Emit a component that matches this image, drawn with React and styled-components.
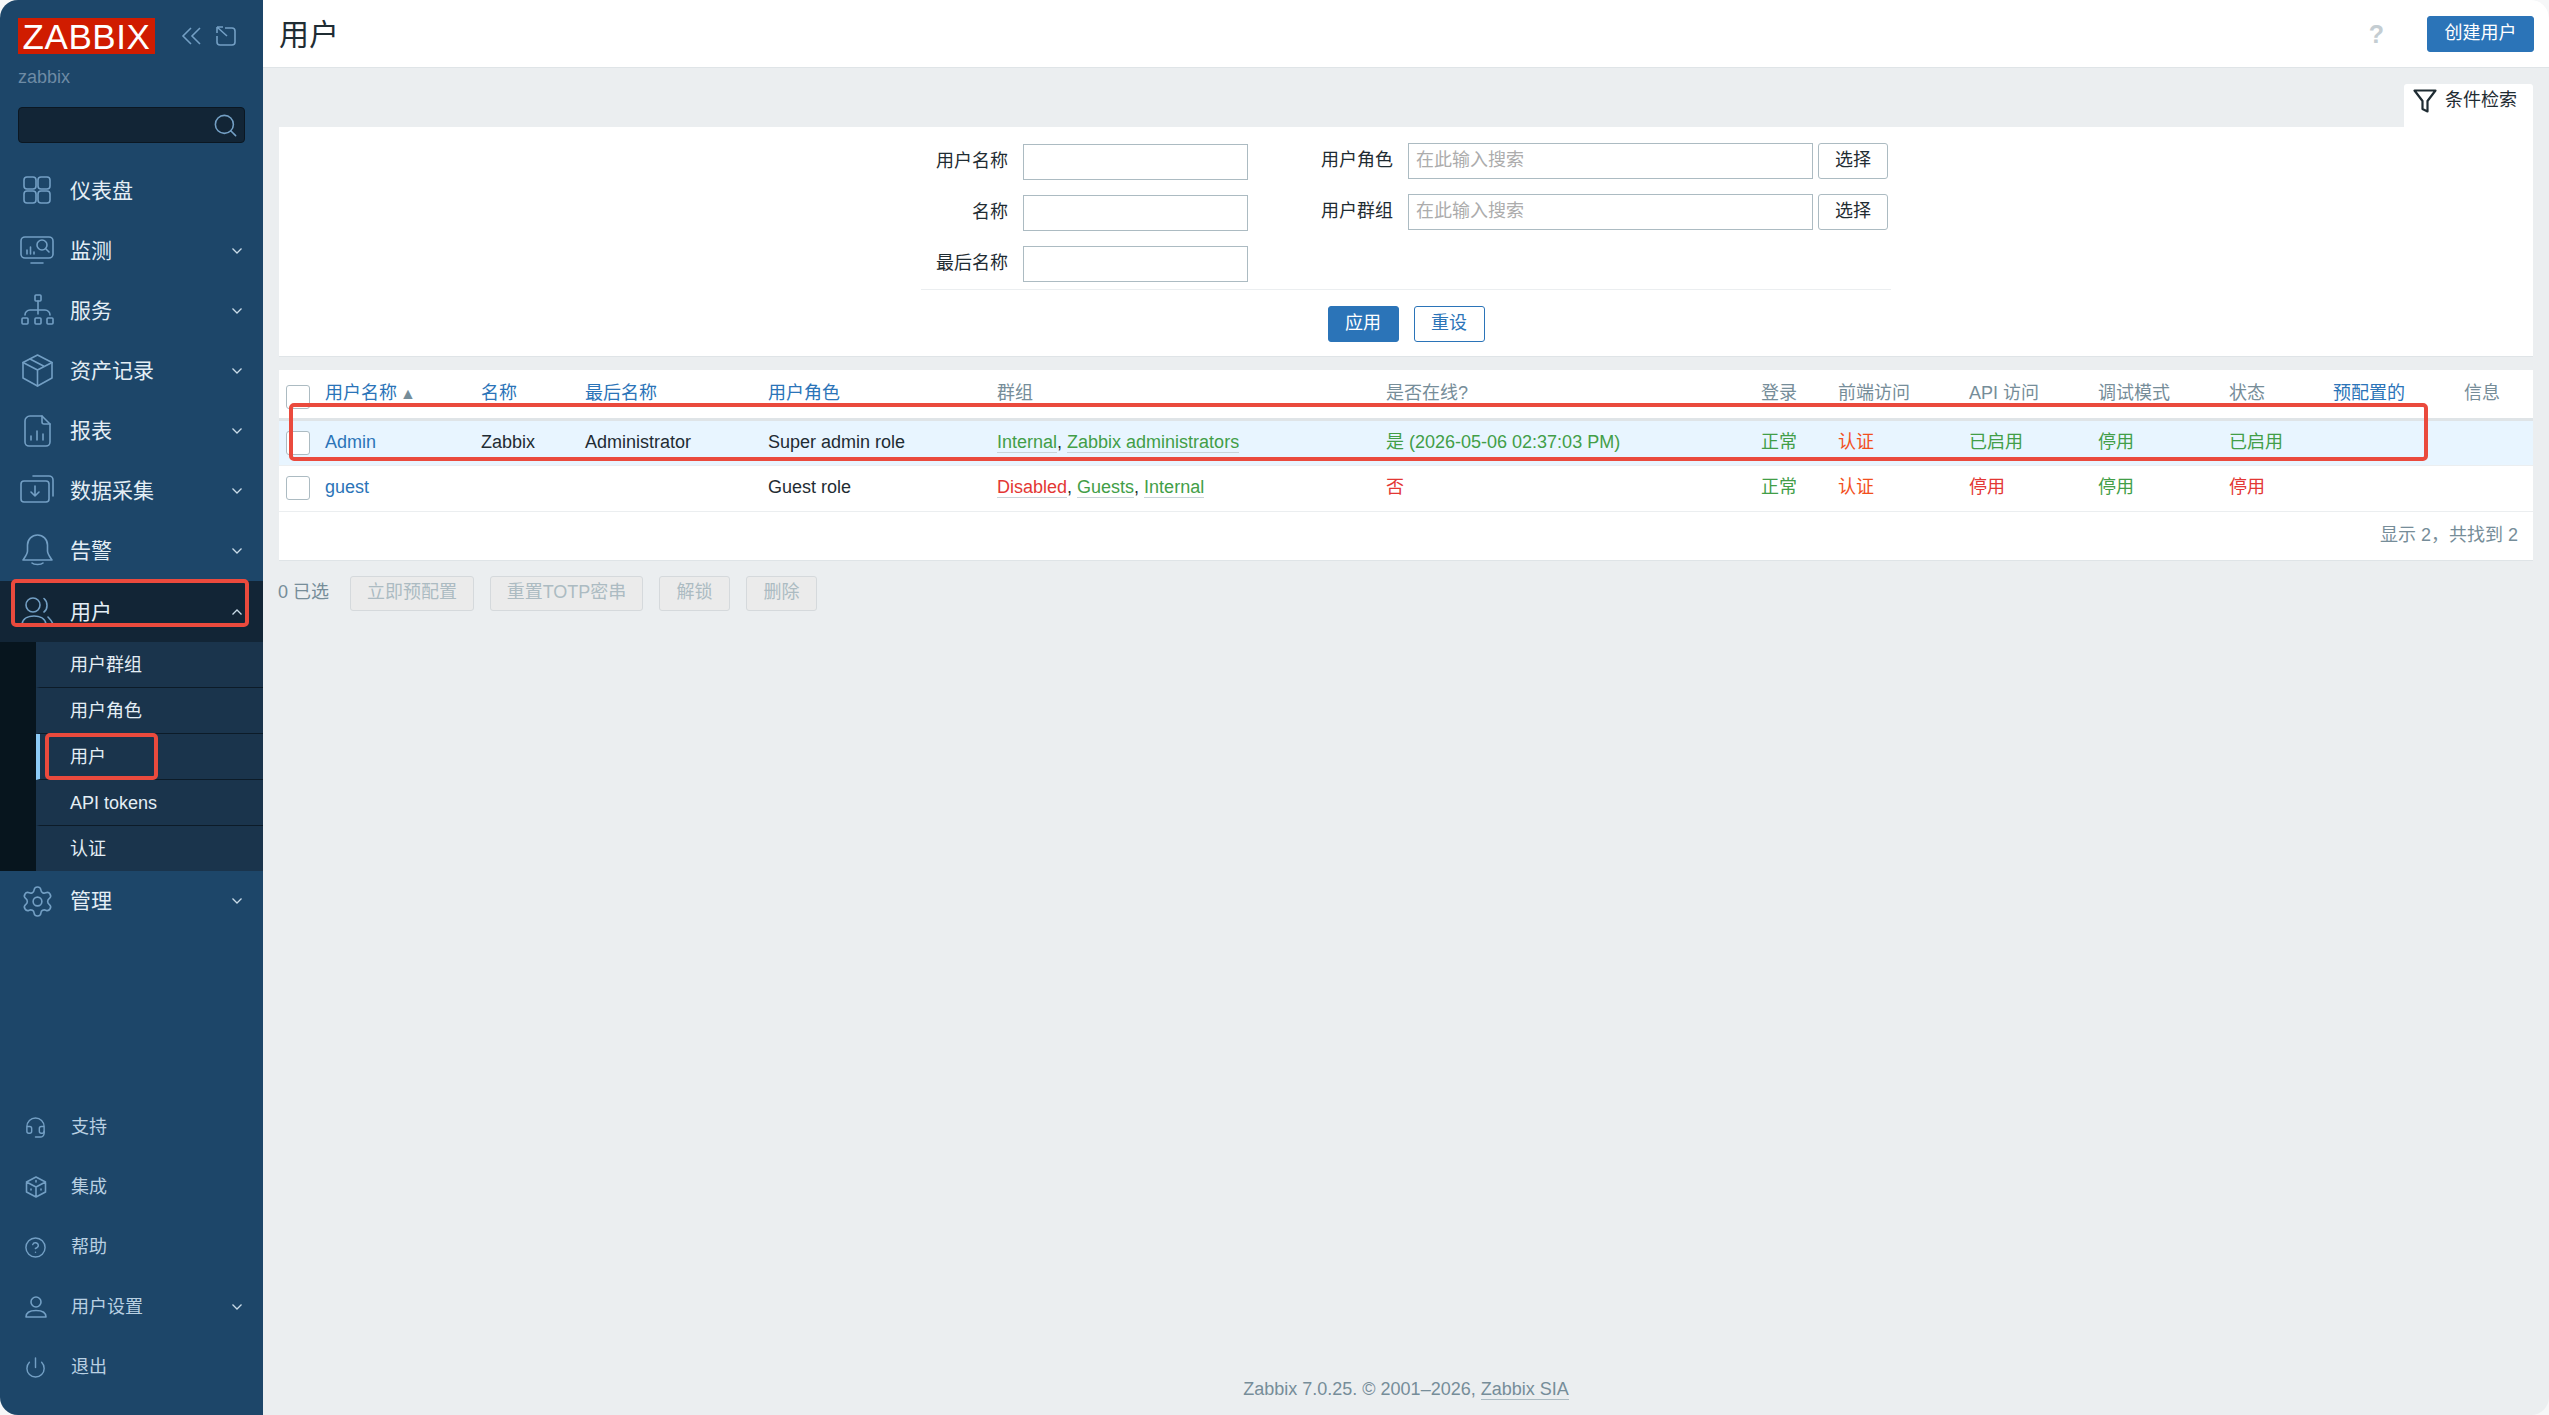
import React from 'react'
import styled, { createGlobalStyle } from 'styled-components'
import { Settings, Headset, CircleHelp, Power, Search } from 'lucide-react'

const ICON = '#739fc4'

const GlobalStyle = createGlobalStyle`
  html, body {
    margin: 0;
    background: #f6f7f8;
    overflow: hidden;
  }
  * {
    box-sizing: border-box;
  }
  body {
    font-family: "Liberation Sans", "Noto Sans CJK SC", sans-serif;
    font-size: 18px;
    line-height: 22px;
    color: #1f2c33;
  }
`

const Shell = styled.div`
  background: #ebeef0;
  border-radius: 18px;
  display: flex;
  height: 100vh;
  overflow: hidden;
  position: relative;
  width: 100%;
`

const Sidebar = styled.aside`
  background: #1d4669;
  display: flex;
  flex: 0 0 263px;
  flex-direction: column;
  padding-top: 18px;
`

const BrandRow = styled.div`
  align-items: center;
  display: flex;
  height: 36px;
  padding-left: 18px;
`

const Logo = styled.div`
  background: #d01c00;
  color: #ffffff;
  font-size: 35px;
  height: 36px;
  letter-spacing: 0.6px;
  line-height: 37px;
  text-align: center;
  width: 137px;
`

const BrandControl = styled.svg`
  fill: none;
  margin-left: ${({ $gap }) => $gap}px;
  stroke: ${ICON};
  stroke-width: 1.6;
`

const Instance = styled.div`
  color: #6e8ba5;
  font-size: 18px;
  line-height: 22px;
  margin-top: 12px;
  padding-left: 18px;
`

const SearchBox = styled.div`
  align-items: center;
  background: #122536;
  border: 1px solid #0b1722;
  border-radius: 4px;
  color: ${ICON};
  display: flex;
  height: 36px;
  justify-content: flex-end;
  margin: 19px 18px 18px 18px;
  padding-right: 5px;
`

const NavRow = styled.div`
  align-items: center;
  background: ${({ $active }) => ($active ? '#122536' : 'transparent')};
  color: #e4eef5;
  display: flex;
  font-size: 21px;
  height: ${({ $active }) => ($active ? 61 : 60)}px;
  line-height: 26px;
  padding-right: 21px;
`

const IconSlot = styled.span`
  align-items: center;
  color: ${ICON};
  display: flex;
  flex: 0 0 70px;
  justify-content: center;
  padding-left: 4px;
`

const NavIcon = styled.svg`
  fill: none;
  stroke: ${ICON};
  stroke-linecap: round;
  stroke-linejoin: round;
  stroke-width: 1.6;
`

const Chevron = styled.svg`
  fill: none;
  margin-left: auto;
  stroke: #c9dbe8;
  stroke-width: 1.3;
`

const SubMenu = styled.div`
  background: #07151e;
  padding-left: 36px;
`

const SubItem = styled.div`
  align-items: center;
  background: #1a344c;
  border-bottom: 1px solid #0c1b28;
  border-left: 4px solid ${({ $active }) => ($active ? '#8ccbf7' : 'transparent')};
  color: #e4eef5;
  display: flex;
  font-size: 18px;
  height: ${({ $last }) => ($last ? 45 : 46)}px;
  padding-left: 30px;

  &:last-child {
    border-bottom: none;
  }
`

const BottomNav = styled.div`
  margin-top: auto;
  padding-bottom: 18px;
`

const BottomRow = styled.div`
  align-items: center;
  color: #b9d0e2;
  display: flex;
  font-size: 18px;
  height: 60px;
  padding-right: 21px;
`

const BottomIcon = styled.span`
  align-items: center;
  color: ${ICON};
  display: flex;
  flex: 0 0 71px;
  justify-content: center;
`

const Main = styled.main`
  display: flex;
  flex: 1;
  flex-direction: column;
  min-width: 0;
`

const Header = styled.header`
  align-items: center;
  background: #ffffff;
  border-bottom: 1px solid #dfe4e7;
  display: flex;
  flex: 0 0 68px;
  padding: 0 15px 0 16px;
`

const Title = styled.h1`
  font-size: 30px;
  font-weight: 400;
  line-height: 36px;
  margin: 2px 0 0;
`

const HelpMark = styled.span`
  color: #c4cdd2;
  font-size: 25px;
  font-weight: 700;
  margin-left: auto;
  margin-right: 43px;
`

const PrimaryButton = styled.button`
  background: #2b74b8;
  border: 1px solid #2b74b8;
  border-radius: 3px;
  color: #ffffff;
  font-family: inherit;
  font-size: 18px;
  height: 36px;
  line-height: 20px;
  padding: 0 0 2px;
  width: ${({ $width }) => $width}px;
`

const OutlineButton = styled(PrimaryButton)`
  background: #ffffff;
  color: #2b74b8;
`

const Content = styled.div`
  padding: 16px 16px 0 16px;
`

const TabRow = styled.div`
  display: flex;
  justify-content: flex-end;
`

const FilterTab = styled.div`
  align-items: flex-start;
  background: #ffffff;
  border-radius: 3px 3px 0 0;
  display: flex;
  font-size: 18px;
  gap: 8px;
  height: 43px;
  padding: 5px 0 0 9px;
  width: 129px;
`

const FilterPanel = styled.section`
  background: #ffffff;
  border-bottom: 1px solid #dfe4e7;
  height: 230px;
  padding-top: 16px;
`

const FilterForm = styled.div`
  margin: 0 auto;
  width: 970px;
`

const FilterColumns = styled.div`
  border-bottom: 1px solid #ebeef0;
  display: flex;
  height: 147px;
`

const LeftColumn = styled.div`
  align-content: start;
  display: grid;
  grid-template-columns: 87px 225px;
  column-gap: 15px;
  row-gap: 15px;
  padding-top: 1px;
`

const RightColumn = styled.div`
  align-content: start;
  display: grid;
  grid-template-columns: 87px 405px 70px;
  column-gap: 15px;
  row-gap: 15px;
  margin-left: 58px;
`

const FieldLabel = styled.label`
  align-self: center;
  padding-bottom: 2px;
  text-align: right;
  white-space: nowrap;
`

const TextField = styled.input`
  background: #ffffff;
  border: 1.5px solid #acbbc2;
  font-family: inherit;
  font-size: 18px;
  height: 36px;
  padding: 0 7px 2px;
  width: 100%;

  &::placeholder {
    color: #acacac;
  }
`

const SelectButton = styled.button`
  background: #ffffff;
  border: 1.5px solid #acbbc2;
  border-radius: 3px;
  color: #1f2c33;
  font-family: inherit;
  font-size: 18px;
  height: 36px;
  line-height: 20px;
  margin-left: -10px;
  padding: 0 0 2px;
  width: 70px;
`

const FilterActions = styled.div`
  display: flex;
  gap: 15px;
  justify-content: center;
  margin-top: 16px;
`

const TableCard = styled.section`
  background: #ffffff;
  border-bottom: 1px solid #dfe4e7;
  margin-top: 13px;
`

const Table = styled.table`
  border-collapse: collapse;
  table-layout: fixed;
  width: 100%;
`

const Th = styled.th`
  border-bottom: 3px solid #dfe4e7;
  color: ${({ $link }) => ($link ? '#2b74b8' : '#768d99')};
  font-size: 18px;
  font-weight: 400;
  height: 49px;
  padding: 0 0 1px;
  text-align: left;
  white-space: nowrap;
`

const HeaderBox = styled.span`
  background: #ffffff;
  border: 1.5px solid #acbbc2;
  border-radius: 3px;
  display: block;
  height: 24px;
  margin: 7px 0 0 7px;
  width: 24px;
`

const SortMark = styled.span`
  color: #768d99;
  font-size: 16px;
  margin-left: 3px;
`

const Row = styled.tr`
  background: ${({ $hot }) => ($hot ? '#e8f5ff' : '#ffffff')};
  border-bottom: 1px solid #ebeef0;
`

const Td = styled.td`
  color: ${({ $tone }) => $tone || '#1f2c33'};
  font-size: 18px;
  height: 46px;
  line-height: 22px;
  padding: 0 0 2px;
  white-space: nowrap;
`

const CheckBox = styled(HeaderBox)`
  margin: 2px 0 0 7px;
`

const NameLink = styled.a`
  color: #2b74b8;
`

const GroupLink = styled.a`
  border-bottom: 1px solid #c9d3d8;
  color: ${({ $tone }) => $tone};
`

const TableFooter = styled.div`
  color: #768d99;
  height: 48px;
  line-height: 46px;
  padding-right: 15px;
  text-align: right;
`

const BulkBar = styled.div`
  align-items: center;
  display: flex;
  gap: 16px;
  margin-top: 15px;
`

const SelectedCount = styled.span`
  color: #768d99;
  margin-left: -1px;
  padding-bottom: 2px;
  width: 56px;
`

const BulkButton = styled.button`
  background: #ebebeb;
  border: 1.5px solid #d5d9dc;
  border-radius: 3px;
  color: #acbbc2;
  font-family: inherit;
  font-size: 18px;
  height: 35px;
  line-height: 20px;
  padding: 0 0 2px;
  width: ${({ $width }) => $width}px;
`

const Footer = styled.footer`
  color: #768d99;
  line-height: 20px;
  margin-top: auto;
  padding-bottom: 16px;
  text-align: center;
`

const FooterLink = styled.a`
  border-bottom: 1px solid #acbbc2;
`

const Mark = styled.div`
  border: 4px solid #ea4a3d;
  border-radius: 5px;
  pointer-events: none;
  position: absolute;
`

const UserMenuMark = styled(Mark)`
  height: 48px;
  left: 11px;
  top: 579px;
  width: 238px;
`

const UserItemMark = styled(Mark)`
  height: 47px;
  left: 45px;
  top: 733px;
  width: 113px;
`

const RowMark = styled(Mark)`
  height: 58px;
  left: 289px;
  top: 403px;
  width: 2139px;
`

const Down = () => (
  <Chevron width="10" height="6" viewBox="0 0 10 6">
    <path d="M0.5 0.5 L5 5 L9.5 0.5" />
  </Chevron>
)

const Up = () => (
  <Chevron width="10" height="6" viewBox="0 0 10 6">
    <path d="M0.5 5.5 L5 1 L9.5 5.5" />
  </Chevron>
)

const Glyph = ({ children }) => (
  <NavIcon width="34" height="34" viewBox="0 0 34 34">{children}</NavIcon>
)

const DashboardIcon = () => (
  <Glyph>
    <rect x="4" y="3" width="12" height="12" rx="3" />
    <rect x="18" y="3" width="12" height="12" rx="3" />
    <rect x="4" y="17" width="12" height="12" rx="3" />
    <rect x="18" y="17" width="12" height="12" rx="3" />
  </Glyph>
)

const MonitorIcon = () => (
  <Glyph>
    <path d="M15 3 H5 a4 4 0 0 0 -4 4 V20 a4 4 0 0 0 4 4 H29 a4 4 0 0 0 4 -4 V7 a4 4 0 0 0 -4 -4 H15" />
    <path d="M11 29 H23 M7 16 V20 M10.5 13 V20 M14 18 V20" />
    <circle cx="22" cy="11" r="5" />
    <path d="M26 15 L29 18" />
  </Glyph>
)

const ServiceIcon = () => (
  <Glyph>
    <rect x="15" y="1" width="6" height="6" rx="1" />
    <rect x="2" y="24" width="6" height="6" rx="1" />
    <rect x="15" y="24" width="6" height="6" rx="1" />
    <rect x="27" y="24" width="6" height="6" rx="1" />
    <path d="M18 7 V20 M5 21 a5 5 0 0 1 5 -5 H25 a5 5 0 0 1 5 5" />
  </Glyph>
)

const InventoryIcon = () => (
  <Glyph>
    <path d="M17.5 1 L32 8.5 V24 L17.5 32 L3 24 V8.5 Z" />
    <path d="M3 8.5 L17.5 16 L32 8.5 M17.5 16 V32 M10 5 L24.5 12.5" />
  </Glyph>
)

const ReportIcon = () => (
  <Glyph>
    <path d="M10 2 H22 L30 10 V28 a4 4 0 0 1 -4 4 H9 a4 4 0 0 1 -4 -4 V7 a5 5 0 0 1 5 -5 Z" />
    <path d="M22 2 V8 a2 2 0 0 0 2 2 H30 M11 22 V26 M17 17 V26 M23 20 V26" />
  </Glyph>
)

const CollectIcon = () => (
  <Glyph>
    <rect x="1" y="7" width="28" height="21" rx="3" />
    <path d="M13 2 H29 a4 4 0 0 1 4 4 V22 M15 12 V22 M11 18 L15 22 L19 18" />
  </Glyph>
)

const BellIcon = () => (
  <Glyph>
    <path d="M17.5 1 a10 10 0 0 0 -10 10 V17 C7.5 20 5 23 3 26 H32 C30 23 27.5 20 27.5 17 V11 a10 10 0 0 0 -10 -10 Z" />
    <path d="M12 29 C14 31 21 31 23 29" />
  </Glyph>
)

const UsersIcon = () => (
  <Glyph>
    <circle cx="13" cy="10" r="7" />
    <path d="M24 3.5 C28 7 28 14 24 17 M2 29 C3 23 9 21 14 21 C19 21 25 23 26 29 M28 22 C30 24 32 26 33 29" />
  </Glyph>
)

const SmallGlyph = ({ children }) => (
  <NavIcon width="22" height="22" viewBox="0 0 22 22">{children}</NavIcon>
)

const DiceIcon = () => (
  <SmallGlyph>
    <path d="M11 1 L20.5 6 V16 L11 21 L1.5 16 V6 Z M1.5 6 L11 11 L20.5 6 M11 11 V21" />
    <path d="M11 4.5 V6 M6 13 V14 M16 13 V14" />
  </SmallGlyph>
)

const PersonIcon = () => (
  <SmallGlyph>
    <circle cx="11" cy="6" r="5" />
    <path d="M1 21 C1 16 6 14.5 11 14.5 C16 14.5 21 16 21 21 Z" />
  </SmallGlyph>
)

const topMenu = [
  { label: '仪表盘', icon: <DashboardIcon /> },
  { label: '监测', icon: <MonitorIcon />, more: true },
  { label: '服务', icon: <ServiceIcon />, more: true },
  { label: '资产记录', icon: <InventoryIcon />, more: true },
  { label: '报表', icon: <ReportIcon />, more: true },
  { label: '数据采集', icon: <CollectIcon />, more: true },
  { label: '告警', icon: <BellIcon />, more: true }
]

const userItems = ['用户群组', '用户角色', '用户', 'API tokens', '认证']

const bottomMenu = [
  { label: '支持', icon: <Headset size={23} strokeWidth={1.5} /> },
  { label: '集成', icon: <DiceIcon /> },
  { label: '帮助', icon: <CircleHelp size={23} strokeWidth={1.5} /> },
  { label: '用户设置', icon: <PersonIcon />, more: true },
  { label: '退出', icon: <Power size={23} strokeWidth={1.5} /> }
]

const columns = [46, 156, 104, 183, 229, 389, 375, 77, 131, 129, 131, 104, 131, 69]

const GREEN = '#429e47'
const RED = '#e33734'
const ORANGE = '#f24f1d'

const Groups = ({ items }) => items.map(([name, tone], i) => (
  <React.Fragment key={name}>
    {i > 0 && ', '}
    <GroupLink $tone={tone}>{name}</GroupLink>
  </React.Fragment>
))

const Sidemenu = () => (
  <Sidebar>
    <BrandRow>
      <Logo>ZABBIX</Logo>
      <BrandControl $gap={26} width="20" height="18" viewBox="0 0 20 18">
        <path d="M10 1 L2 9 L10 17 M19 1 L11 9 L19 17" />
      </BrandControl>
      <BrandControl $gap={15} width="20" height="20" viewBox="0 0 20 20">
        <path d="M1 1 L11 10 M1 1 H7 M1 1 V7 M9 2 H16 a3 3 0 0 1 3 3 V16 a3 3 0 0 1 -3 3 H4 a3 3 0 0 1 -3 -3 V10" />
      </BrandControl>
    </BrandRow>
    <Instance>zabbix</Instance>
    <SearchBox>
      <Search size={27} strokeWidth={1.4} />
    </SearchBox>
    {topMenu.map(({ label, icon, more }) => (
      <NavRow key={label}>
        <IconSlot>{icon}</IconSlot>
        {label}
        {more && <Down />}
      </NavRow>
    ))}
    <NavRow $active>
      <IconSlot><UsersIcon /></IconSlot>
      用户
      <Up />
    </NavRow>
    <SubMenu>
      {userItems.map((item, i) => (
        <SubItem key={item} $active={item === '用户'} $last={i === userItems.length - 1}>{item}</SubItem>
      ))}
    </SubMenu>
    <NavRow>
      <IconSlot><Settings size={35} strokeWidth={1.1} /></IconSlot>
      管理
      <Down />
    </NavRow>
    <BottomNav>
      {bottomMenu.map(({ label, icon, more }) => (
        <BottomRow key={label}>
          <BottomIcon>{icon}</BottomIcon>
          {label}
          {more && <Down />}
        </BottomRow>
      ))}
    </BottomNav>
  </Sidebar>
)

const Filter = () => (
  <>
    <TabRow>
      <FilterTab>
        <svg width="24" height="24" viewBox="0 0 24 24" fill="none" stroke="#1f2c33" strokeWidth="2.2" strokeLinejoin="round">
          <path d="M1.5 1.5 H22.5 L14.5 12 V22.5 L9.5 20 V12 Z" />
        </svg>
        条件检索
      </FilterTab>
    </TabRow>
    <FilterPanel>
      <FilterForm>
        <FilterColumns>
          <LeftColumn>
            <FieldLabel>用户名称</FieldLabel>
            <TextField readOnly />
            <FieldLabel>名称</FieldLabel>
            <TextField readOnly />
            <FieldLabel>最后名称</FieldLabel>
            <TextField readOnly />
          </LeftColumn>
          <RightColumn>
            <FieldLabel>用户角色</FieldLabel>
            <TextField readOnly placeholder="在此输入搜索" />
            <SelectButton>选择</SelectButton>
            <FieldLabel>用户群组</FieldLabel>
            <TextField readOnly placeholder="在此输入搜索" />
            <SelectButton>选择</SelectButton>
          </RightColumn>
        </FilterColumns>
        <FilterActions>
          <PrimaryButton $width={71}>应用</PrimaryButton>
          <OutlineButton $width={71}>重设</OutlineButton>
        </FilterActions>
      </FilterForm>
    </FilterPanel>
  </>
)

const UsersTable = () => (
  <TableCard>
    <Table>
      <colgroup>
        {columns.map((width, i) => <col key={i} width={width} />)}
      </colgroup>
      <thead>
        <tr>
          <Th><HeaderBox /></Th>
          <Th $link>用户名称<SortMark>▲</SortMark></Th>
          <Th $link>名称</Th>
          <Th $link>最后名称</Th>
          <Th $link>用户角色</Th>
          <Th>群组</Th>
          <Th>是否在线?</Th>
          <Th>登录</Th>
          <Th>前端访问</Th>
          <Th>API 访问</Th>
          <Th>调试模式</Th>
          <Th>状态</Th>
          <Th $link>预配置的</Th>
          <Th>信息</Th>
        </tr>
      </thead>
      <tbody>
        <Row $hot>
          <Td><CheckBox /></Td>
          <Td><NameLink>Admin</NameLink></Td>
          <Td>Zabbix</Td>
          <Td>Administrator</Td>
          <Td>Super admin role</Td>
          <Td><Groups items={[['Internal', GREEN], ['Zabbix administrators', GREEN]]} /></Td>
          <Td $tone={GREEN}>是 (2026-05-06 02:37:03 PM)</Td>
          <Td $tone={GREEN}>正常</Td>
          <Td $tone={ORANGE}>认证</Td>
          <Td $tone={GREEN}>已启用</Td>
          <Td $tone={GREEN}>停用</Td>
          <Td $tone={GREEN}>已启用</Td>
          <Td />
          <Td />
        </Row>
        <Row>
          <Td><CheckBox /></Td>
          <Td><NameLink>guest</NameLink></Td>
          <Td />
          <Td />
          <Td>Guest role</Td>
          <Td><Groups items={[['Disabled', RED], ['Guests', GREEN], ['Internal', GREEN]]} /></Td>
          <Td $tone={RED}>否</Td>
          <Td $tone={GREEN}>正常</Td>
          <Td $tone={ORANGE}>认证</Td>
          <Td $tone={RED}>停用</Td>
          <Td $tone={GREEN}>停用</Td>
          <Td $tone={RED}>停用</Td>
          <Td />
          <Td />
        </Row>
      </tbody>
    </Table>
    <TableFooter>显示 2，共找到 2</TableFooter>
  </TableCard>
)

const App = () => (
  <Shell>
    <GlobalStyle />
    <Sidemenu />
    <Main>
      <Header>
        <Title>用户</Title>
        <HelpMark>?</HelpMark>
        <PrimaryButton $width={107}>创建用户</PrimaryButton>
      </Header>
      <Content>
        <Filter />
        <UsersTable />
        <BulkBar>
          <SelectedCount>0 已选</SelectedCount>
          <BulkButton $width={124}>立即预配置</BulkButton>
          <BulkButton $width={153}>重置TOTP密串</BulkButton>
          <BulkButton $width={71}>解锁</BulkButton>
          <BulkButton $width={71}>删除</BulkButton>
        </BulkBar>
      </Content>
      <Footer>
        Zabbix 7.0.25. © 2001–2026, <FooterLink>Zabbix SIA</FooterLink>
      </Footer>
    </Main>
    <UserMenuMark />
    <UserItemMark />
    <RowMark />
  </Shell>
)

export default App
